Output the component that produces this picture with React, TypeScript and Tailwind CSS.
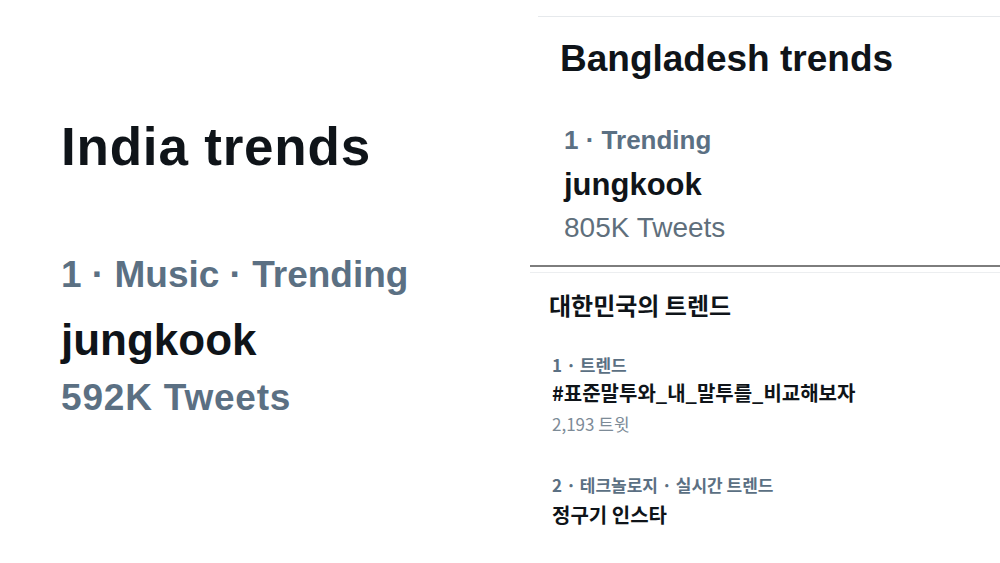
export default function App() {
  const en = "font-['Liberation_Sans',Arial,sans-serif]"
  const ko = "font-['Noto_Sans_CJK_KR','Noto_Sans',sans-serif]"

  return (
    <div className="flex w-[1000px] h-[563px] overflow-hidden bg-white">
      {/* India */}
      <div className={`w-[530px] shrink-0 pl-[61px] pt-[120px] ${en}`}>
        <div className="text-[53px] leading-none font-bold tracking-[0.8px] text-[#0f1419]">
          India trends
        </div>
        <div className="mt-[83px] text-[37px] leading-none font-bold text-[#5b7083]">
          1 · Music · Trending
        </div>
        <div className="mt-[25px] text-[44px] leading-none font-bold text-[#0f1419]">
          jungkook
        </div>
        <div className="mt-[17px] text-[37px] leading-none font-bold tracking-[0.8px] text-[#5b7083]">
          592K Tweets
        </div>
      </div>

      <div className="flex-1 flex flex-col">
        {/* Bangladesh */}
        <div className={`h-[267px] shrink-0 pt-[16px] border-b-2 border-[#7d7d7d] ${en}`}>
          <div className="ml-[8px] h-full border-t border-[#e6e9ec] pl-[22px] pt-[23px]">
            <div className="text-[37px] leading-none font-bold text-[#0f1419]">
              Bangladesh trends
            </div>
            <div className="ml-[4px]">
              <div className="mt-[50px] text-[26px] leading-none font-bold text-[#5b7083]">
                1 · Trending
              </div>
              <div className="mt-[16px] text-[31px] leading-none font-bold text-[#0f1419]">
                jungkook
              </div>
              <div className="mt-[14px] text-[28px] leading-none text-[#5f6f7c]">
                805K Tweets
              </div>
            </div>
          </div>
        </div>

        {/* Korea */}
        <div className={`flex-1 mt-[5px] border-t border-[#eceef0] pl-[19px] pt-[20px] ${ko}`}>
          <div className="text-[24px] leading-none font-bold text-[#0f1419]">
            대한민국의 트렌드
          </div>
          <div className="ml-[3px]">
            <div className="mt-[39px] text-[17px] leading-none font-bold text-[#5b7083]">
              1 · 트렌드
            </div>
            <div className="mt-[10px] text-[20px] leading-none font-bold text-[#0f1419]">
              #표준말투와_내_말투를_비교해보자
            </div>
            <div className="mt-[12px] text-[17px] leading-none text-[#7d8b97]">
              2,193 트윗
            </div>
            <div className="mt-[44px] text-[17px] leading-none font-bold text-[#5b7083]">
              2 · 테크놀로지 · 실시간 트렌드
            </div>
            <div className="mt-[12px] text-[20px] leading-none font-bold text-[#0f1419]">
              정구기 인스타
            </div>
          </div>
        </div>
      </div>
    </div>
  )
}
